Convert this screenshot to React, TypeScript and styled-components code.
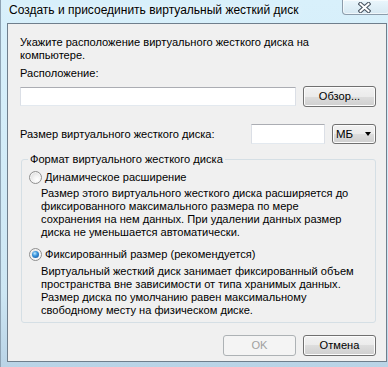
import React from 'react';
import styled, { createGlobalStyle } from 'styled-components';

const GlobalStyle = createGlobalStyle`
  html, body {
    margin: 0;
    padding: 0;
  }
  body {
    background: #cfe5f1;
    font-family: "Liberation Sans", Arial, sans-serif;
  }
`;

const Window = styled.div`
  width: 388px;
  height: 367px;
  box-sizing: border-box;
  border-left: 1px solid #8ea3b4;
  background: linear-gradient(to bottom, #d8f0fb 0%, #d4edf9 30%, #cde6f3 80%, #b9d3e6 100%);
  display: flex;
  flex-direction: column;
  overflow: hidden;
  color: #000;
  font-size: 11.1px;
`;

const TitleBar = styled.div`
  height: 23px;
  display: flex;
  align-items: flex-start;
`;

const Title = styled.div`
  padding: 4px 0 0 8px;
  font-size: 12px;
  line-height: 13px;
  white-space: nowrap;
  text-shadow: 0 0 6px rgba(255, 255, 255, 0.9);
`;

const CloseButton = styled.div`
  margin-left: auto;
  margin-right: -2px;
  width: 48px;
  height: 15px;
  box-sizing: border-box;
  border: 1px solid #8c9cab;
  border-top: none;
  border-radius: 0 0 4px 4px;
  background: linear-gradient(to bottom, #eaf6fc 0%, #e0eff7 50%, #d6e8f2 100%);
  box-shadow: inset 0 0 0 1px rgba(255, 255, 255, 0.6);
  display: flex;
  align-items: center;
  justify-content: center;
  padding-right: 3px;
`;

const Client = styled.div`
  margin-left: 6px;
  width: 380px;
  height: 339px;
  box-sizing: border-box;
  border: 1px solid #6f7e8c;
  background: #f0f0f0;
  padding: 12px 10px 7px 12px;
  display: flex;
  flex-direction: column;
`;

const Text = styled.p<{ $top?: number; $indent?: number }>`
  margin: ${(p) => p.$top ?? 0}px 0 0 ${(p) => p.$indent ?? 0}px;
  line-height: 13px;
  white-space: nowrap;
`;

const Row = styled.div<{ $top: number }>`
  display: flex;
  align-items: center;
  gap: 7px;
  margin-top: ${(p) => p.$top}px;
`;

const RowLabel = styled.span`
  flex: 1;
  line-height: 13px;
  white-space: nowrap;
`;

const TextBox = styled.input<{ $width: number; $height?: number }>`
  width: ${(p) => p.$width}px;
  height: ${(p) => p.$height ?? 19}px;
  box-sizing: border-box;
  margin: 0;
  padding: 0 3px;
  border: 1px solid #dbdfe6;
  border-top-color: #abadb3;
  border-bottom-color: #e3e9ef;
  border-radius: 0;
  background: #fff;
  font: inherit;
  outline: none;
`;

const Button = styled.button`
  width: 73px;
  height: 21px;
  box-sizing: border-box;
  margin: 0;
  padding: 0;
  border: 1px solid #707070;
  border-radius: 3px;
  background: linear-gradient(to bottom, #f2f2f2 0%, #ebebeb 50%, #dddddd 50%, #cfcfcf 100%);
  box-shadow: inset 0 0 0 1px #fcfcfc;
  font: inherit;
  color: #000;
  line-height: 13px;

  &:disabled {
    border-color: #adb2b5;
    background: #f4f4f4;
    box-shadow: none;
    color: #a0a0a0;
  }
`;

const Combo = styled.div`
  width: 44px;
  height: 20px;
  box-sizing: border-box;
  border: 1px solid #707070;
  border-radius: 3px;
  background: linear-gradient(to bottom, #f2f2f2 0%, #ebebeb 50%, #dddddd 50%, #cfcfcf 100%);
  box-shadow: inset 0 0 0 1px #fcfcfc;
  display: flex;
  align-items: center;
  justify-content: space-between;
  padding: 0 4px 0 3px;
  font-size: 11.5px;
  line-height: 13px;
`;

const Arrow = styled.span`
  width: 0;
  height: 0;
  border-left: 3.5px solid transparent;
  border-right: 3.5px solid transparent;
  border-top: 4px solid #000;
`;

const Group = styled.fieldset`
  margin: 9px 0 0 1px;
  padding: 2px 7px 5px 7px;
  border: 1px solid #d5dfe5;
  border-radius: 3px;
  min-width: 0;
`;

const Legend = styled.legend`
  padding: 0 2px;
  margin-left: -1px;
  line-height: 13px;
`;

const Option = styled.label<{ $top: number }>`
  display: flex;
  align-items: center;
  gap: 3px;
  height: 14px;
  margin-top: ${(p) => p.$top}px;
  line-height: 13px;
  white-space: nowrap;
`;

const Radio = styled.span<{ $checked?: boolean }>`
  width: 13px;
  height: 13px;
  box-sizing: border-box;
  border-radius: 50%;
  border: 1px solid #8f8f8f;
  background: radial-gradient(circle at 65% 70%, #ffffff 0%, #f4f4f4 35%, #d2d2d2 100%);
  box-shadow: inset 0 0 0 1px #f6f6f6;
  display: flex;
  align-items: center;
  justify-content: center;
  flex-shrink: 0;

  &::after {
    content: '';
    display: ${(p) => (p.$checked ? 'block' : 'none')};
    width: 7px;
    height: 7px;
    border-radius: 50%;
    background: radial-gradient(circle at 40% 35%, #bfe9ff 0%, #3a95dc 40%, #114a94 100%);
  }
`;

const Footer = styled.div`
  display: flex;
  justify-content: flex-end;
  gap: 7px;
  margin-top: 12px;
`;

const CloseGlyph = () => (
  <svg width="13" height="11" viewBox="0 0 13 11">
    <path d="M2.5 2 L10.5 9 M10.5 2 L2.5 9" stroke="#4a5663" strokeWidth="4.2" strokeLinecap="square" />
    <path d="M2.5 2 L10.5 9 M10.5 2 L2.5 9" stroke="#ffffff" strokeWidth="2" strokeLinecap="square" />
  </svg>
);

const App = () => {
  return (
    <>
      <GlobalStyle />
      <Window>
        <TitleBar>
          <Title>Создать и присоединить виртуальный жесткий диск</Title>
          <CloseButton>
            <CloseGlyph />
          </CloseButton>
        </TitleBar>
        <Client>
          <Text>
            Укажите расположение виртуального жесткого диска на
            <br />
            компьютере.
          </Text>
          <Text $top={5}>Расположение:</Text>
          <Row $top={6}>
            <TextBox $width={276} readOnly />
            <Button>Обзор...</Button>
          </Row>
          <Row $top={17}>
            <RowLabel>Размер виртуального жесткого диска:</RowLabel>
            <TextBox $width={74} $height={20} readOnly />
            <Combo>
              МБ
              <Arrow />
            </Combo>
          </Row>
          <Group>
            <Legend>Формат виртуального жесткого диска</Legend>
            <Option $top={2}>
              <Radio />
              Динамическое расширение
            </Option>
            <Text $top={3} $indent={12}>
              Размер этого виртуального жесткого диска расширяется до
              <br />
              фиксированного максимального размера по мере
              <br />
              сохранения на нем данных. При удалении данных размер
              <br />
              диска не уменьшается автоматически.
            </Text>
            <Option $top={8}>
              <Radio $checked />
              Фиксированный размер (рекомендуется)
            </Option>
            <Text $top={4} $indent={12}>
              Виртуальный жесткий диск занимает фиксированный объем
              <br />
              пространства вне зависимости от типа хранимых данных.
              <br />
              Размер диска по умолчанию равен максимальному
              <br />
              свободному месту на физическом диске.
            </Text>
          </Group>
          <Footer>
            <Button disabled>OK</Button>
            <Button>Отмена</Button>
          </Footer>
        </Client>
      </Window>
    </>
  );
};

export default App;
